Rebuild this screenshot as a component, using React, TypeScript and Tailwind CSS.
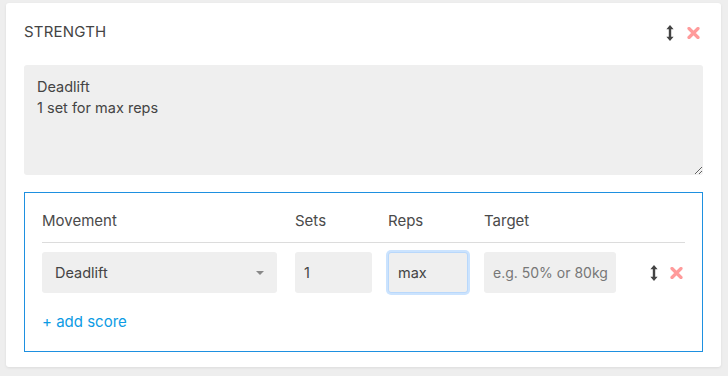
import React from "react";

const font = { fontFamily: "Inter, 'Open Sans', sans-serif" };

const MoveIcon = () => (
  <svg width="8" height="16" viewBox="0 0 8 16" className="block">
    <path
      d="M4 0 L7.6 4.2 H5.2 V11.8 H7.6 L4 16 L0.4 11.8 H2.8 V4.2 H0.4 Z"
      fill="#444"
    />
  </svg>
);

const RemoveIcon = () => (
  <svg width="13" height="12" viewBox="0 0 13 12" className="block">
    <path
      d="M2 1.5 L11 10.5 M11 1.5 L2 10.5"
      stroke="#ff9b9b"
      strokeWidth="3.2"
      strokeLinecap="round"
    />
  </svg>
);

export default function App() {
  return (
    <div className="min-h-screen bg-[#eeeeee] pt-[3px] pl-[6px] pr-[7px]" style={font}>
      {/* Section card */}
      <div className="bg-white rounded-[3px] shadow-[0_1px_3px_rgba(0,0,0,0.08)] px-[18px] pt-[16px] pb-[15px]">
        {/* Header */}
        <div className="h-[27px] flex items-center justify-between mb-[19px]">
          <span className="text-[15px] text-[#444] tracking-[0.2px]">STRENGTH</span>
          <div className="flex items-center gap-[13px] pr-[3px]">
            <MoveIcon />
            <RemoveIcon />
          </div>
        </div>

        {/* Notes */}
        <textarea
          readOnly
          defaultValue={"Deadlift\n1 set for max reps"}
          className="block w-full h-[110px] bg-[#efefef] rounded-[3px] px-[13px] pt-[11px] text-[14.5px] leading-[21px] text-[#444] outline-none"
          style={font}
        />

        {/* Scores */}
        <div className="mt-[17px] border border-[#1e90e0] px-[17px]">
          <div className="flex items-center pt-[17px] pb-[10px] border-b border-[#dcdcdc] text-[15px] leading-[22px] text-[#4a4a4a]">
            <span className="w-[253px]">Movement</span>
            <span className="w-[93px]">Sets</span>
            <span className="w-[96px]">Reps</span>
            <span>Target</span>
          </div>

          <div className="flex items-center mt-[9px] h-[41px] text-[14.5px] text-[#444]">
            <div className="w-[235px] h-full bg-[#efefef] rounded-[3px] flex items-center justify-between pl-[13px] pr-[13px]">
              <span>Deadlift</span>
              <span className="w-0 h-0 border-l-[4px] border-r-[4px] border-t-[4px] border-l-transparent border-r-transparent border-t-[#888]" />
            </div>
            <div className="ml-[18px] w-[77px] h-full bg-[#efefef] rounded-[3px] flex items-center px-[9px]">1</div>
            <div className="ml-[16px] w-[80px] h-full bg-[#efefef] rounded-[3px] border border-[#b9d8fb] shadow-[0_0_0_2px_#cbe3fe] flex items-center px-[9px]">
              max
            </div>
            <div className="ml-[16px] w-[132px] h-full bg-[#efefef] rounded-[3px] flex items-center pl-[9px] text-[14px] text-[#777] whitespace-nowrap overflow-hidden">
              e.g. 50% or 80kg
            </div>
            <div className="ml-[34px] flex items-center gap-[12px]">
              <MoveIcon />
              <RemoveIcon />
            </div>
          </div>

          <div className="mt-[18px] pb-[18px] text-[15px] leading-[22px] text-[#0c9be4]">+ add score</div>
        </div>
      </div>
    </div>
  );
}
